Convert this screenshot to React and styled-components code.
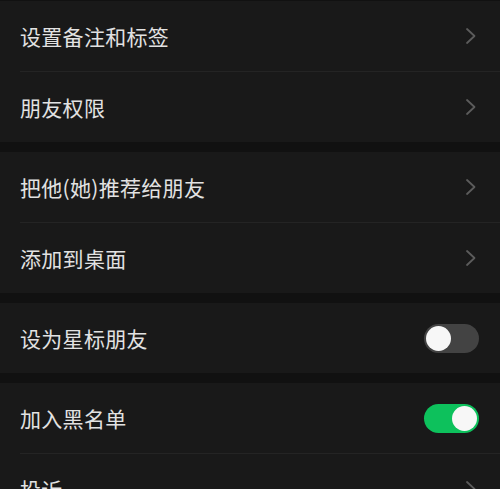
import React, { useState } from "react";
import styled, { createGlobalStyle } from "styled-components";

const GlobalStyle = createGlobalStyle`
  html, body {
    margin: 0;
    padding: 0;
    background: #111111;
  }
  body {
    font-family: "Noto Sans CJK SC", "Noto Sans", sans-serif;
  }
`;

const Page = styled.div`
  width: 500px;
  height: 489px;
  overflow: hidden;
  padding-top: 1px;
  box-sizing: border-box;
  background: #111111;
  display: flex;
  flex-direction: column;
  gap: 10px;
`;

const Group = styled.div`
  background: #191919;
  display: flex;
  flex-direction: column;
`;

const Row = styled.div`
  position: relative;
  height: 70px;
  flex-shrink: 0;
  display: flex;
  align-items: center;
  justify-content: space-between;
  padding: 0 21px 0 20px;
  box-sizing: border-box;

  & + & {
    margin-top: 1px;
  }
  & + &::before {
    content: "";
    position: absolute;
    left: 20px;
    right: 0;
    top: -1px;
    height: 1px;
    background: #242424;
  }
`;

const Label = styled.span`
  color: #e2e2e2;
  font-size: 21px;
  line-height: 1;
  letter-spacing: 0.3px;
`;

const Chevron = styled.svg`
  width: 14px;
  height: 18px;
  margin-right: 1px;
`;

const Track = styled.button`
  width: 55px;
  height: 29px;
  border: none;
  padding: 2px;
  border-radius: 15px;
  background: ${(p) => (p.on ? "#0dc15c" : "#434343")};
  display: flex;
  justify-content: ${(p) => (p.on ? "flex-end" : "flex-start")};
  align-items: center;
  box-sizing: border-box;
  cursor: pointer;
`;

const Knob = styled.span`
  width: 25px;
  height: 25px;
  border-radius: 50%;
  background: #f7f7f7;
`;

const Arrow = () => (
  <Chevron viewBox="0 0 14 18">
    <path d="M3 2 L10.5 9 L3 16" fill="none" stroke="#5c5c5c" strokeWidth="1.8" strokeLinecap="round" strokeLinejoin="round" />
  </Chevron>
);

const Switch = ({ on, onToggle }) => (
  <Track on={on ? 1 : 0} onClick={onToggle}>
    <Knob />
  </Track>
);

export default function App() {
  const [star, setStar] = useState(false);
  const [block, setBlock] = useState(true);

  return (
    <>
      <GlobalStyle />
      <Page>
        <Group>
          <Row>
            <Label>设置备注和标签</Label>
            <Arrow />
          </Row>
          <Row>
            <Label>朋友权限</Label>
            <Arrow />
          </Row>
        </Group>
        <Group>
          <Row>
            <Label>把他(她)推荐给朋友</Label>
            <Arrow />
          </Row>
          <Row>
            <Label>添加到桌面</Label>
            <Arrow />
          </Row>
        </Group>
        <Group>
          <Row>
            <Label>设为星标朋友</Label>
            <Switch on={star} onToggle={() => setStar(!star)} />
          </Row>
        </Group>
        <Group>
          <Row>
            <Label>加入黑名单</Label>
            <Switch on={block} onToggle={() => setBlock(!block)} />
          </Row>
          <Row>
            <Label>投诉</Label>
            <Arrow />
          </Row>
        </Group>
      </Page>
    </>
  );
}
